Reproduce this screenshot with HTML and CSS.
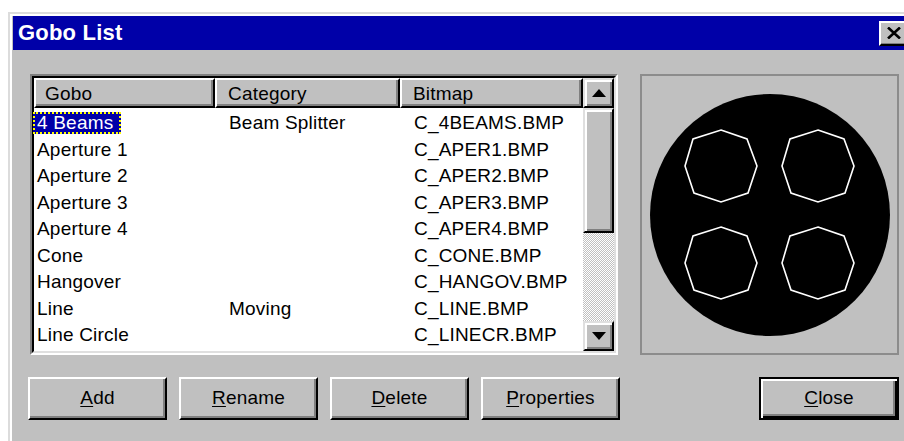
FILE: index.html
```html
<!DOCTYPE html>
<html lang="en">
<head>
<meta charset="utf-8">
<title>Gobo List</title>
<link rel="stylesheet" href="styles.css">
</head>
<body>
<div class="window">
  <div class="titlebar">
    <span class="title">Gobo List</span>
    <button class="title-close" aria-label="Close">
      <svg width="14" height="12" viewBox="0 0 14 12"><path d="M1 0.5 L13 11.5 M13 0.5 L1 11.5" stroke="#000" stroke-width="2.6" fill="none"/></svg>
    </button>
  </div>
  <div class="content">
    <div class="main-row">
      <div class="listview">
        <div class="lv-inner">
          <div class="lv-table">
            <div class="lv-header">
              <div class="hcell">Gobo</div>
              <div class="hcell">Category</div>
              <div class="hcell">Bitmap</div>
            </div>
            <div class="lv-rows">
              <div class="row"><span class="cell first"><span class="sel">4 Beams</span></span><span class="cell">Beam Splitter</span><span class="cell">C_4BEAMS.BMP</span></div>
              <div class="row"><span class="cell first">Aperture 1</span><span class="cell"></span><span class="cell">C_APER1.BMP</span></div>
              <div class="row"><span class="cell first">Aperture 2</span><span class="cell"></span><span class="cell">C_APER2.BMP</span></div>
              <div class="row"><span class="cell first">Aperture 3</span><span class="cell"></span><span class="cell">C_APER3.BMP</span></div>
              <div class="row"><span class="cell first">Aperture 4</span><span class="cell"></span><span class="cell">C_APER4.BMP</span></div>
              <div class="row"><span class="cell first">Cone</span><span class="cell"></span><span class="cell">C_CONE.BMP</span></div>
              <div class="row"><span class="cell first">Hangover</span><span class="cell"></span><span class="cell">C_HANGOV.BMP</span></div>
              <div class="row"><span class="cell first">Line</span><span class="cell">Moving</span><span class="cell">C_LINE.BMP</span></div>
              <div class="row"><span class="cell first">Line Circle</span><span class="cell"></span><span class="cell">C_LINECR.BMP</span></div>
            </div>
          </div>
          <div class="vscroll">
            <div class="sb-btn">
              <svg width="14" height="8" viewBox="0 0 14 8"><path d="M7 0 L14 8 L0 8 Z" fill="#000"/></svg>
            </div>
            <div class="sb-thumb"></div>
            <div class="sb-track"></div>
            <div class="sb-btn">
              <svg width="14" height="8" viewBox="0 0 14 8"><path d="M0 0 L14 0 L7 8 Z" fill="#000"/></svg>
            </div>
          </div>
        </div>
      </div>
      <div class="preview">
        <svg class="gobo" width="242" height="244" viewBox="0 0 242 244">
          <defs>
            <polygon id="oct" points="0,-36 26,-27 36,0 27,27 0,36 -27,27 -36,0 -28,-27" fill="none" stroke="#fff" stroke-width="1.6"/>
          </defs>
          <ellipse cx="121" cy="122" rx="120" ry="121" fill="#000"/>
          <use href="#oct" transform="translate(72 73)"/>
          <use href="#oct" transform="translate(169 73)"/>
          <use href="#oct" transform="translate(72 170)"/>
          <use href="#oct" transform="translate(169 170)"/>
        </svg>
      </div>
    </div>
    <div class="button-row">
      <div class="btn-group">
        <button class="btn"><u>A</u>dd</button>
        <button class="btn"><u>R</u>ename</button>
        <button class="btn"><u>D</u>elete</button>
        <button class="btn"><u>P</u>roperties</button>
      </div>
      <button class="btn default"><u>C</u>lose</button>
    </div>
  </div>
</div>
</body>
</html>
```
FILE: styles.css
```css
html, body {
  margin: 0;
  padding: 0;
  overflow: hidden;
  background: #fff;
}

body {
  padding: 12px 0 0 8px;
  font-family: "Liberation Sans", Arial, sans-serif;
  font-size: 19px;
  letter-spacing: 0.2px;
  color: #000;
}

.window {
  width: 906px;
  height: 440px;
  box-sizing: border-box;
  background: #c0c0c0;
  border-top: 2px solid #dcdcdc;
  border-left: 2px solid #dcdcdc;
  box-shadow: inset 2px 2px #fff;
  padding: 2px 0 0 3px;
}

/* caption */
.titlebar {
  height: 34px;
  background: #0000a8;
  display: flex;
  align-items: center;
  justify-content: space-between;
  padding-left: 5px;
}

.title {
  color: #fff;
  font-weight: bold;
  font-size: 22px;
  letter-spacing: 0.2px;
}

.title-close {
  width: 30px;
  height: 25px;
  margin-right: 5px;
  padding: 0;
  background: #c0c0c0;
  border: 2px solid;
  border-color: #fff #000 #000 #fff;
  box-shadow: inset -1px -1px #808080;
  display: flex;
  align-items: center;
  justify-content: center;
}

/* dialog body */
.content {
  padding: 24px 0 0 17px;
  width: 869px;
}

.main-row {
  display: flex;
  gap: 22px;
  height: 281px;
}

/* sunken list view */
.listview {
  width: 588px;
  box-sizing: border-box;
  border: 2px solid;
  border-color: #808080 #fff #fff #808080;
}

.lv-inner {
  height: 100%;
  box-sizing: border-box;
  border: 2px solid;
  border-color: #000 #dfdfdf #dfdfdf #000;
  display: flex;
  background: #fff;
}

.lv-table {
  flex: 1;
  display: flex;
  flex-direction: column;
}

.lv-header,
.row {
  display: grid;
  grid-template-columns: 181px 185px 183px;
}

.hcell {
  height: 30px;
  box-sizing: border-box;
  background: #c0c0c0;
  border-top: 2px solid #fff;
  border-left: 2px solid #fff;
  border-right: 2px solid #000;
  border-bottom: 2px solid #000;
  box-shadow: inset -2px -2px #808080;
  padding-left: 11px;
  line-height: 27px;
  white-space: nowrap;
  overflow: hidden;
}

.hcell:first-child {
  padding-left: 9px;
}

.lv-rows {
  flex: 1;
  padding-top: 2px;
}

.row {
  height: 26.5px;
  line-height: 26.5px;
  white-space: nowrap;
}

.cell {
  padding-left: 14px;
}

.cell.first {
  padding-left: 3px;
}

.sel {
  display: inline-block;
  background: #0000a8;
  color: #fff;
  line-height: 22px;
  padding: 0 8px 0 4px;
  margin-left: -4px;
  outline: 2px dotted #ffff00;
  outline-offset: -2px;
}

/* vertical scroll bar */
.vscroll {
  width: 31px;
  display: flex;
  flex-direction: column;
  background: #c0c0c0;
}

.sb-btn,
.sb-thumb {
  box-sizing: border-box;
  background: #c0c0c0;
  border: 2px solid;
  border-color: #dfdfdf #000 #000 #dfdfdf;
  box-shadow: inset 2px 2px #fff, inset -2px -2px #808080;
}

.sb-btn {
  height: 30px;
  display: flex;
  align-items: center;
  justify-content: center;
}

.sb-thumb {
  height: 125px;
}

.sb-track {
  flex: 1;
  background: repeating-conic-gradient(#c0c0c0 0 25%, #fff 0 50%) 0 0 / 2px 2px;
}

/* bitmap preview */
.preview {
  width: 259px;
  box-sizing: border-box;
  border: 2px solid #8c8c8c;
  display: flex;
  align-items: center;
  justify-content: center;
}

/* push buttons */
.button-row {
  margin: 22px 0 0 -2px;
  display: flex;
  justify-content: space-between;
}

.btn-group {
  display: flex;
  gap: 12px;
}

.btn {
  width: 139px;
  height: 43px;
  box-sizing: border-box;
  font-family: "Liberation Sans", Arial, sans-serif;
  font-size: 19px;
  letter-spacing: 0.2px;
  color: #000;
  background: #c0c0c0;
  border: 2px solid;
  border-color: #fff #000 #000 #fff;
  box-shadow: inset -2px -2px #808080;
  padding: 0 0 2px;
}

.btn u {
  text-underline-offset: 2px;
}

.btn.default {
  width: 140px;
  border-color: #000;
  box-shadow: inset 2px 2px #fff, inset -2px -2px #000, inset -4px -4px #808080;
}
```
